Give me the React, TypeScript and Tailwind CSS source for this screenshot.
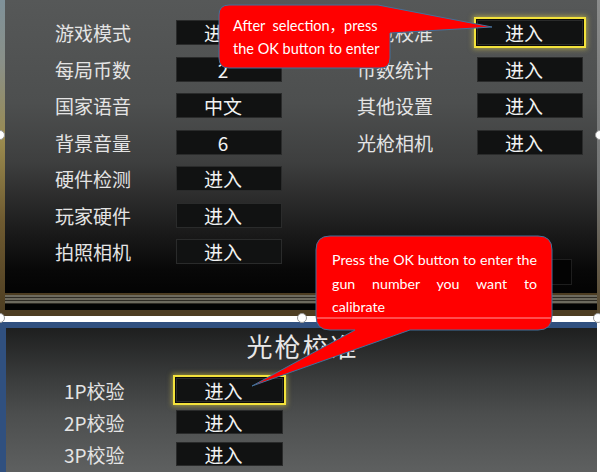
import React from 'react';

const cjk = "font-['Noto_Sans_CJK_SC','Noto_Sans',sans-serif]";

type CellProps = { children: React.ReactNode; active?: boolean; w?: string; h?: string };

// dark value box used by the menu rows
function Cell({ children, active, w = 'w-[106px]', h = 'h-[25px]' }: CellProps) {
  return (
    <div
      className={`${w} ${h} flex items-center justify-center pr-[12px] bg-[#111212] border border-[#2a2b2b] text-[#f2f2f2] text-[19px] leading-none ${
        active ? 'shadow-[0_0_0_1px_#0a0a0a,0_0_0_3px_#f3e23b,0_0_5px_4px_rgba(250,232,70,0.5)]' : ''
      }`}
    >
      {children}
    </div>
  );
}

function Row({ label, value, active, labelW }: { label: string; value: string; active?: boolean; labelW: string }) {
  return (
    <div className="flex items-center h-[25px]">
      <div className={`${labelW} text-[19px] leading-none text-[#e4e4e4]`}>{label}</div>
      <Cell active={active}>{value}</Cell>
    </div>
  );
}

const leftRows = [
  ['游戏模式', '进入'],
  ['每局币数', '2'],
  ['国家语音', '中文'],
  ['背景音量', '6'],
  ['硬件检测', '进入'],
  ['玩家硬件', '进入'],
  ['拍照相机', '进入'],
];

const rightRows = [
  ['光枪校准', '进入'],
  ['币数统计', '进入'],
  ['其他设置', '进入'],
  ['光枪相机', '进入'],
];

const calibRows = ['1P校验', '2P校验', '3P校验'];

function Handle({ className }: { className: string }) {
  return <div className={`absolute w-[10px] h-[10px] rounded-full bg-white border border-[#9a9a9a] ${className}`} />;
}

export default function App() {
  return (
    <div className={`relative w-[600px] h-[472px] overflow-hidden bg-white ${cjk}`}>
      {/* upper screenshot: settings menu */}
      <div className="flex h-[316px]">
        <div className="w-[5px] bg-[linear-gradient(to_bottom,#7f9199_0%,#8a9088_20%,#9a8a4e_45%,#6e5a30_70%,#4d3d22_100%)]" />
        <div className="flex-1 flex flex-col">
          <div className="h-[293px] flex pl-[50px] pt-[20px] bg-[linear-gradient(to_bottom,#565858_0%,#4d4f4f_35%,#3e3f3f_55%,#1c1c1c_78%,#080808_92%,#030303_100%)]">
            <div className="flex flex-col gap-[11.5px]">
              {leftRows.map(([l, v]) => (
                <Row key={l} label={l} value={v} labelW="w-[121px]" />
              ))}
            </div>
            <div className="ml-[75px] flex flex-col">
              <div className="flex flex-col gap-[11.5px]">
                {rightRows.map(([l, v], i) => (
                  <Row key={l} label={l} value={v} active={i === 0} labelW="w-[120px]" />
                ))}
              </div>
              <div className="mt-[104px] ml-[120px] w-[95px] h-[26px] bg-[#030303] border border-[#1e1e1e]" />
            </div>
          </div>
          {/* frame stripes */}
          <div className="h-[2px] bg-[#4d3d22]" />
          <div className="h-[2px] bg-[#6d6a5e]" />
          <div className="h-[1px] bg-[#2e2b24]" />
          <div className="h-[2px] bg-[#6d6a5e]" />
          <div className="h-[1px] bg-[#2e2b24]" />
          <div className="h-[2px] bg-[#6d6a5e]" />
          <div className="h-[1px] bg-[#2e2b24]" />
          <div className="h-[6px] bg-[#030303]" />
          <div className="flex-1 bg-[#4d3d22]" />
        </div>
        <div className="w-[3px] bg-[linear-gradient(to_bottom,#8a8c8c_0%,#707272_60%,#5a4a2e_100%)]" />
      </div>

      <div className="h-[6px] bg-white" />

      {/* lower screenshot: gun calibration */}
      <div className="flex h-[150px]">
        <div className="w-[6px] bg-[#30507f]" />
        <div className="flex-1 flex flex-col">
          <div className="h-[6px] bg-[#30507f]" />
          <div className="flex-1 flex flex-col bg-[linear-gradient(to_bottom,#1e1f1f_0%,#3a3c3c_35%,#4c4e4e_60%,#5e6060_100%)]">
            <div className="pt-[3px] pl-[2px] text-center text-[26px] leading-[29px] tracking-[2px] text-[#e8e8e8]">光枪校准</div>
            <div className="mt-[18px] pl-[58px] flex flex-col gap-[8px]">
              {calibRows.map((l, i) => (
                <div key={l} className="flex items-center h-[24px]">
                  <div className="w-[112px] text-[19px] leading-none text-[#e4e4e4]">{l}</div>
                  <Cell active={i === 0} w="w-[107px]" h="h-[24px]">进入</Cell>
                </div>
              ))}
            </div>
          </div>
        </div>
        <div className="w-[3px] bg-white" />
      </div>

      {/* callout shapes */}
      <svg className="absolute left-0 top-0 pointer-events-none" width="600" height="472" viewBox="0 0 600 472">
        <path
          d="M229 5 H378 L492 27 L390 33 V58 Q390 68 380 68 H229 Q219 68 219 58 V15 Q219 5 229 5 Z"
          fill="#ff0000"
          stroke="#41719c"
          strokeWidth="1"
        />
        <path
          d="M330 236 H538 Q552 236 552 250 V316 Q552 330 538 330 H410 L252 386 L355 330 H330 Q316 330 316 316 V250 Q316 236 330 236 Z"
          fill="#ff0000"
          stroke="#41719c"
          strokeWidth="1"
        />
        <line x1="317" y1="318" x2="551" y2="318" stroke="#ff9a9a" strokeWidth="1" />
      </svg>

      <div className="absolute left-[233px] top-[13.5px] w-[144px] font-['Lato','Noto_Sans_CJK_SC',sans-serif] text-[14.5px] leading-[23px] text-white">
        <div className="text-justify [text-align-last:justify] whitespace-nowrap">After&nbsp; selection，press</div>
        <div className="whitespace-nowrap">the OK button to enter</div>
      </div>

      <div className="absolute left-[332px] top-[248px] w-[205px] font-['Lato','Noto_Sans_CJK_SC',sans-serif] text-[14.2px] leading-[23.5px] text-white">
        <div className="text-justify [text-align-last:justify] whitespace-nowrap">Press the OK button to enter the</div>
        <div className="text-justify [text-align-last:justify]">gun number you want to</div>
        <div>calibrate</div>
      </div>

      {/* selection handles */}
      <Handle className="left-[-5px] top-[130px]" />
      <Handle className="left-[595px] top-[130px]" />
      <Handle className="left-[-5px] top-[313px]" />
      <Handle className="left-[297px] top-[313px]" />
      <Handle className="left-[593px] top-[313px]" />
    </div>
  );
}
